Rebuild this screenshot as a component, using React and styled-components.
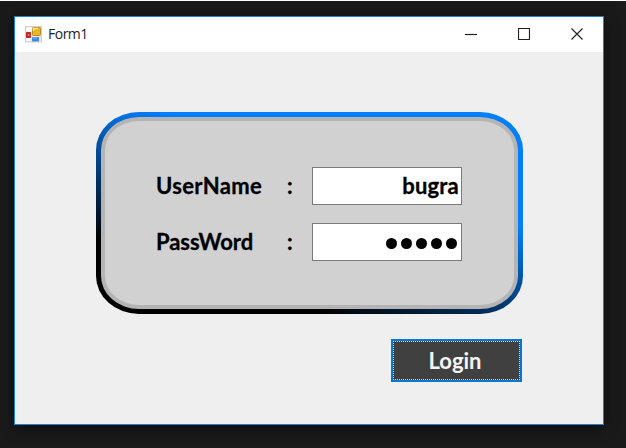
import React from 'react';
import styled, { createGlobalStyle } from 'styled-components';

const GlobalStyle = createGlobalStyle`
  * { box-sizing: border-box; }
  body { margin: 0; background: #1a1a1a; overflow: hidden; }
`;

const Desktop = styled.main`
  width: 626px;
  height: 448px;
  padding: 15px 0 0 14px;
  background: #1a1a1a;
  border-top: 1px solid #fff;
`;

const Window = styled.section`
  width: 590px;
  height: 409px;
  background: #efefef;
  border: 1px solid #1883d7;
  box-shadow: 0 3px 12px rgba(0, 0, 0, 0.5);
`;

const TitleBar = styled.header`
  display: flex;
  align-items: center;
  height: 35px;
  padding-left: 10px;
  background: #fff;
`;

const Title = styled.h1`
  flex: 1;
  margin: 0 0 2px 6px;
  font: 400 14px/20px 'Open Sans', sans-serif;
  letter-spacing: -0.5px;
  color: #1c1c24;
`;

const CaptionButton = styled.button`
  display: grid;
  place-items: center;
  width: 53px;
  height: 34px;
  margin-bottom: 2px;
  padding: 0;
  border: 0;
  background: transparent;
`;

const Content = styled.div`
  display: flex;
  flex-direction: column;
  padding: 60px 0 0 81px;
`;

const Frame = styled.div`
  width: 427px;
  height: 202px;
  padding: 5px;
  border-radius: 43px / 38px;
  background: linear-gradient(18deg, #000 22%, #007fff 66%);
`;

const Panel = styled.form`
  display: flex;
  flex-direction: column;
  gap: 18px;
  height: 100%;
  padding: 46px 0 0 51px;
  border: 4px solid #b4b4b4;
  border-radius: 38px / 33px;
  background: #d1d1d1;
`;

const Row = styled.label`
  display: grid;
  grid-template-columns: 131px 25px 150px;
  align-items: center;
  height: 38px;
  font: 700 22px/36px Lato, sans-serif;
  color: #000;
`;

const Label = styled.span`
  letter-spacing: ${(p) => p.$spacing};
  -webkit-text-stroke: 0.3px #000;
`;

const Field = styled.input`
  width: 150px;
  height: 38px;
  padding: 0 2px 1px;
  border: 1px solid #7a7a7a;
  border-radius: 0;
  outline: 0;
  background: #fff;
  color: #000;
  font: 700 22px/36px Lato, sans-serif;
  letter-spacing: 0.2px;
  -webkit-text-stroke: 0.3px #000;
  text-align: right;
`;

const SecretField = styled.div`
  display: flex;
  align-items: center;
  justify-content: flex-end;
  gap: 4px;
  width: 150px;
  height: 38px;
  padding: 2px 4px 0 0;
  border: 1px solid #7a7a7a;
  background: #fff;
`;

const Dot = styled.i`
  width: 11px;
  height: 11px;
  border-radius: 50%;
  background: #000;
`;

const LoginButton = styled.button`
  width: 131px;
  height: 43px;
  margin: 25px 0 0 295px;
  padding: 0;
  border: 2px solid #0078d7;
  background: #404040;
  color: #f5f5f5;
  font: 700 22px/38px Lato, sans-serif;
`;

const FocusRing = styled.span`
  display: block;
  height: 39px;
  padding-right: 3px;
  border: 1px dotted #d8d8d8;
`;

const FormIcon = () => (
  <svg width="17" height="17" viewBox="0 0 17 17">
    <rect x=".5" y=".5" width="16" height="15.5" fill="#e5e5e5" stroke="#cfcfcf" />
    <path d="M1.5 1.5h5v4h-5zM1.5 12h4v3h-4z" fill="#fff" />
    <rect x="7.5" y="1.5" width="8" height="8" rx="1" fill="#e9b520" stroke="#bd8a21" />
    <path d="M8.5 5V2.5H13" stroke="#ffe687" strokeWidth="1.5" fill="none" />
    <rect x="1" y="6" width="5" height="6" rx=".7" fill="#b72e25" />
    <path d="M3 8l2 1-2 1z" fill="#ee9d91" />
    <rect x="7" y="11" width="7" height="4.5" rx=".8" fill="#4287df" />
    <path d="M8 12h4" stroke="#8dbdf5" />
  </svg>
);

const captions = [
  { name: 'Minimize', d: 'M0 6.5h12' },
  { name: 'Maximize', d: 'M.5 .5h11v11H.5z' },
  { name: 'Close', d: 'M.5 .5l11 11M11.5 .5l-11 11' },
];

export default function App() {
  return (
    <>
      <GlobalStyle />
      <Desktop>
        <Window>
          <TitleBar>
            <FormIcon />
            <Title>Form1</Title>
            {captions.map(({ name, d }) => (
              <CaptionButton key={name} aria-label={name}>
                <svg width="12" height="12" viewBox="0 0 12 12">
                  <path d={d} fill="none" stroke="#222" strokeWidth="1.2" />
                </svg>
              </CaptionButton>
            ))}
          </TitleBar>
          <Content>
            <Frame>
              <Panel>
                <Row>
                  <Label $spacing="0.35px">UserName</Label>
                  <Label $spacing="0">:</Label>
                  <Field defaultValue="bugra" />
                </Row>
                <Row>
                  <Label $spacing="-0.05px">PassWord</Label>
                  <Label $spacing="0">:</Label>
                  <SecretField>
                    {[0, 1, 2, 3, 4].map((n) => <Dot key={n} />)}
                  </SecretField>
                </Row>
              </Panel>
            </Frame>
            <LoginButton type="button"><FocusRing>Login</FocusRing></LoginButton>
          </Content>
        </Window>
      </Desktop>
    </>
  );
}
